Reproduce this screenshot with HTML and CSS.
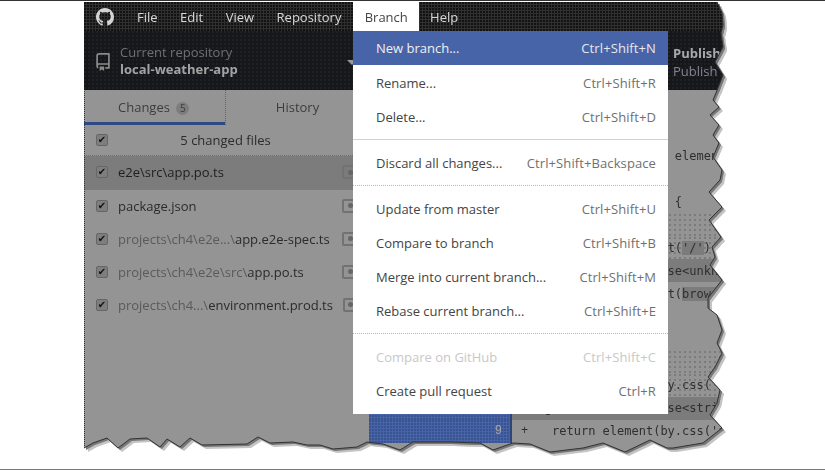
FILE: index.html
```
<!DOCTYPE html>
<html>
	<head>
		<meta charset="utf-8">
		<title>Branch menu</title>
		<link rel="stylesheet" href="styles.css">
	</head>
	<body>
		<div class="shot">
			<div class="torn">
				<div class="window">
					<div class="titlebar">
						<svg class="logo" viewBox="0 0 16 16"><path d="M8 0C3.58 0 0 3.58 0 8c0 3.54 2.29 6.53 5.47 7.59.4.07.55-.17.55-.38 0-.19-.01-.82-.01-1.49-2.01.37-2.53-.49-2.69-.94-.09-.23-.48-.94-.82-1.13-.28-.15-.68-.52-.01-.53.63-.01 1.08.58 1.23.82.72 1.21 1.87.87 2.33.66.07-.52.28-.87.51-1.07-1.78-.2-3.64-.89-3.64-3.95 0-.87.31-1.59.82-2.15-.08-.2-.36-1.02.08-2.12 0 0 .67-.21 2.2.82.64-.18 1.32-.27 2-.27s1.36.09 2 .27c1.53-1.04 2.2-.82 2.2-.82.44 1.1.16 1.92.08 2.12.51.56.82 1.27.82 2.15 0 3.07-1.87 3.75-3.65 3.95.29.25.54.73.54 1.48 0 1.07-.01 1.93-.01 2.2 0 .21.15.46.55.38A8.01 8.01 0 0 0 16 8c0-4.42-3.58-8-8-8Z"/></svg>
						<span class="top-item">File</span>
						<span class="top-item">Edit</span>
						<span class="top-item">View</span>
						<span class="top-item">Repository</span>
						<span class="top-item active">Branch</span>
						<span class="top-item">Help</span>
					</div>
					<div class="toolbar">
						<div class="repo">
							<svg class="repo-icon" viewBox="0 0 16 16"><path d="M2 2.5A2.5 2.5 0 0 1 4.5 0h8.75a.75.75 0 0 1 .75.75v12.5a.75.75 0 0 1-.75.75h-2.5a.75.75 0 0 1 0-1.5h1.75v-2h-8a1 1 0 0 0-.714 1.7.75.75 0 1 1-1.072 1.05A2.495 2.495 0 0 1 2 11.5Zm10.5-1h-8a1 1 0 0 0-1 1v6.708A2.486 2.486 0 0 1 4.5 9h8ZM5 12.25a.25.25 0 0 1 .25-.25h3.5a.25.25 0 0 1 .25.25v3.25a.25.25 0 0 1-.4.2l-1.45-1.087a.25.25 0 0 0-.3 0L5.4 15.7a.25.25 0 0 1-.4-.2Z"/></svg>
							<div class="repo-text">
								<div class="repo-label">Current repository</div>
								<div class="repo-name">local-weather-app</div>
							</div>
							<span class="caret"></span>
						</div>
						<div class="publish">
							<div class="publish-title">Publish</div>
							<div class="publish-sub">Publish</div>
						</div>
					</div>
					<div class="content">
						<div class="sidebar">
							<div class="tabs">
								<div class="tab current">Changes <span class="count">5</span></div>
								<div class="tab">History</div>
							</div>
							<div class="all-files">
								<span class="check"></span>
								<span class="all-label">5 changed files</span>
							</div>
							<div class="file selected"><span class="check"></span><span class="path">e2e\src\app.po.ts</span><span class="status"></span></div>
							<div class="file"><span class="check"></span><span class="path">package.json</span><span class="status"></span></div>
							<div class="file"><span class="check"></span><span class="path"><span class="dir">projects\ch4\e2e...\</span>app.e2e-spec.ts</span><span class="status"></span></div>
							<div class="file"><span class="check"></span><span class="path"><span class="dir">projects\ch4\e2e\src\</span>app.po.ts</span><span class="status"></span></div>
							<div class="file"><span class="check"></span><span class="path"><span class="dir">projects\ch4...\</span>environment.prod.ts</span><span class="status"></span></div>
						</div>
						<div class="diff">
							<div class="line"><pre>     import { by, element } from 'protractor'</pre></div>
							<div class="line"><pre></pre></div>
							<div class="line"><pre>     navigateTo() {</pre></div>
							<div class="line dots"><pre></pre></div>
							<div class="line dots"><pre>return browser.ge<b>t(<i>'/'</i>)</b></pre></div>
							<div class="line dense"><pre>navigate(): Promise&lt;unknown&gt; {</pre></div>
							<div class="line"><pre>return browser.ge<b>t(<i>browser.baseUrl</i>)</b></pre></div>
							<div class="line"><pre></pre></div>
							<div class="line"><pre></pre></div>
							<div class="line dots"><pre></pre></div>
							<div class="line dots"><pre> return element(by.css('app-root h1')).getText()</pre></div>
							<div class="line dense added"><span class="gutter"></span><pre>getTitle(): Promise&lt;string&gt; {</pre></div>
							<div class="line added"><span class="gutter"><span class="num">9</span></span><span class="sign">+</span><pre> return element(by.css('app-root h1')).getText()</pre></div>
						</div>
					</div>
				</div>
			</div>
			<svg class="edge" viewBox="0 0 640 451">
				<polyline points="633,0 638,11 639,23 637,31 639,45 631,60 639,73 634,86 629,98 635,105 626,113 635,123 629,133 635,141 629,155 638,168 636,178 625,190 638,205 625,218 637,235 628,245 631,255 626,263 638,278 624,296 624,306 633,313 638,328 633,341 638,351 631,365 624,375 636,388 633,401 626,413 638,426 619,441 589,446 583,446 566,438 541,450 519,441 499,446 466,450 446,442 429,441 409,448 396,441 366,440 329,440 316,448 299,442 283,440 273,445 249,447 236,443 223,443 209,440 186,441 174,435 163,442 118,443 106,436 96,445 83,437 76,445 63,436 46,437 34,446 23,436 9,441 0,446"/>
				<polyline class="edge-left" points="0.5,446 0.5,88"/>
			</svg>
			<div class="menu">
				<div class="menu-item highlighted"><span>New branch...</span><span class="keys">Ctrl+Shift+N</span></div>
				<div class="menu-item"><span>Rename...</span><span class="keys">Ctrl+Shift+R</span></div>
				<div class="menu-item"><span>Delete...</span><span class="keys">Ctrl+Shift+D</span></div>
				<div class="menu-sep"></div>
				<div class="menu-item"><span>Discard all changes...</span><span class="keys">Ctrl+Shift+Backspace</span></div>
				<div class="menu-sep dotted"></div>
				<div class="menu-item"><span>Update from master</span><span class="keys">Ctrl+Shift+U</span></div>
				<div class="menu-item"><span>Compare to branch</span><span class="keys">Ctrl+Shift+B</span></div>
				<div class="menu-item"><span>Merge into current branch...</span><span class="keys">Ctrl+Shift+M</span></div>
				<div class="menu-item"><span>Rebase current branch...</span><span class="keys">Ctrl+Shift+E</span></div>
				<div class="menu-sep dotted"></div>
				<div class="menu-item disabled"><span>Compare on GitHub</span><span class="keys">Ctrl+Shift+C</span></div>
				<div class="menu-item"><span>Create pull request</span><span class="keys">Ctrl+R</span></div>
			</div>
		</div>
	</body>
</html>
```

FILE: styles.css
```
:root {
	--pane: #949494;
	--blue: #4764a8;
	--dot: radial-gradient(circle at 1px 1px, #7b7b7b 0.7px, transparent 0.9px);
}
html, body {
	margin: 0;
	background: #ffffff;
}
.shot {
	position: relative;
	box-sizing: border-box;
	width: 825px;
	height: 470px;
	overflow: hidden;
	background: #ffffff;
	border-top: 1px solid #333333;
	border-bottom: 1px solid #777777;
	font-family: "Open Sans", "Noto Sans", sans-serif;
	font-size: 13px;
}

/* torn paper effect */
.torn {
	width: 640px;
	height: 451px;
	margin: 1px 0 0 84px;
	filter: drop-shadow(2px 2px 0 #777777) drop-shadow(2px 2px 0 #c4c4c4);
}
.window {
	display: flex;
	flex-direction: column;
	height: 100%;
	background: var(--pane);
	clip-path: polygon(633px 0, 638px 11px, 639px 23px, 637px 31px, 639px 45px, 631px 60px, 639px 73px, 634px 86px, 629px 98px, 635px 105px, 626px 113px, 635px 123px, 629px 133px, 635px 141px, 629px 155px, 638px 168px, 636px 178px, 625px 190px, 638px 205px, 625px 218px, 637px 235px, 628px 245px, 631px 255px, 626px 263px, 638px 278px, 624px 296px, 624px 306px, 633px 313px, 638px 328px, 633px 341px, 638px 351px, 631px 365px, 624px 375px, 636px 388px, 633px 401px, 626px 413px, 638px 426px, 619px 441px, 589px 446px, 583px 446px, 566px 438px, 541px 450px, 519px 441px, 499px 446px, 466px 450px, 446px 442px, 429px 441px, 409px 448px, 396px 441px, 366px 440px, 329px 440px, 316px 448px, 299px 442px, 283px 440px, 273px 445px, 249px 447px, 236px 443px, 223px 443px, 209px 440px, 186px 441px, 174px 435px, 163px 442px, 118px 443px, 106px 436px, 96px 445px, 83px 437px, 76px 445px, 63px 436px, 46px 437px, 34px 446px, 23px 436px, 9px 441px, 0 446px, 0 0);
}
.edge {
	position: absolute;
	left: 84px;
	top: 1px;
	width: 640px;
	height: 451px;
}
.edge polyline {
	fill: none;
	stroke: #333333;
	stroke-width: 1;
}
.edge .edge-left {
	stroke-dasharray: 1 1;
}

/* title bar */
.titlebar {
	display: flex;
	align-items: center;
	flex: none;
	height: 29px;
	background-color: #303030;
	background-image: radial-gradient(circle at 1px 1px, #111111 0.7px, transparent 0.9px);
	background-size: 3px 3px;
	color: #d8d8d8;
}
.logo {
	flex: none;
	width: 18px;
	height: 18px;
	margin: 0 11.75px 0 12px;
	fill: #d4d4d4;
}
.top-item {
	padding: 0 11.25px;
}
.top-item.active {
	align-self: stretch;
	display: flex;
	align-items: center;
	padding: 0 11px 0 12px;
	background: #ffffff;
	color: #444444;
}

/* toolbar */
.toolbar {
	display: flex;
	flex: none;
	height: 59px;
	background-color: #15171a;
	background-image: radial-gradient(circle at 1px 1px, #2a2c2f 0.6px, transparent 0.8px);
	background-size: 4px 4px;
}
.repo {
	display: flex;
	align-items: center;
	flex: none;
	gap: 10px;
	box-sizing: border-box;
	width: 285px;
	padding: 3px 12px 0;
	line-height: 17px;
}
.repo-icon {
	flex: none;
	width: 18px;
	height: 18px;
	margin: 0 -2px;
	fill: #8a8a8a;
}
.repo-text {
	margin-top: -2px;
	white-space: nowrap;
}
.repo-label {
	color: #707070;
}
.repo-name {
	color: #a3a3a3;
	font-weight: 700;
}
.caret {
	margin-left: auto;
	border: 5px solid transparent;
	border-top-color: #999999;
	border-bottom: 0;
}
.publish {
	margin-left: 304px;
	padding-top: 13px;
	line-height: 18px;
	white-space: nowrap;
}
.publish-title {
	color: #a9a9a9;
	font-weight: 700;
}
.publish-sub {
	color: #808590;
}

/* changes list */
.content {
	display: flex;
	flex: 1;
	min-height: 0;
}
.sidebar {
	flex: none;
	width: 285px;
	color: #2b2b2b;
}
.tabs {
	display: flex;
	height: 35px;
	line-height: 34px;
}
.tab {
	flex: 1;
	text-align: center;
	color: #3d3d3d;
}
.tab.current {
	box-sizing: border-box;
	flex: none;
	width: 142px;
	padding-left: 34px;
	text-align: left;
	border-right: 1px dotted #666666;
	box-shadow: inset 0 -3px 0 #2e4a85;
}
.count {
	display: inline-block;
	width: 13px;
	height: 13px;
	margin-left: 3px;
	border-radius: 50%;
	background: #7d7d7d;
	font-size: 10px;
	line-height: 13px;
	text-align: center;
}
.all-files {
	display: flex;
	align-items: center;
	box-sizing: border-box;
	height: 31px;
	padding-left: 12px;
	border-bottom: 1px dotted #6e6e6e;
}
.all-label {
	flex: 1;
	padding-right: 26px;
	text-align: center;
}
.check {
	display: flex;
	align-items: center;
	justify-content: center;
	flex: none;
	box-sizing: border-box;
	width: 12px;
	height: 12px;
	border: 1px solid #666666;
	border-radius: 2px;
	background: #7e7e7e;
}
.check::after {
	content: "\2714";
	font-family: "DejaVu Sans", sans-serif;
	font-size: 10px;
	line-height: 10px;
	color: #111111;
}
.file {
	display: flex;
	align-items: center;
	gap: 10px;
	box-sizing: border-box;
	height: 33px;
	padding: 0 0 2px 12px;
	white-space: nowrap;
}
.file.selected {
	height: 34px;
	background-image: var(--dot);
	background-size: 2px 2px;
	color: #1f1f1f;
}
.path {
	flex: 1;
}
.dir {
	color: #5a5a5a;
}
.status {
	flex: none;
	box-sizing: border-box;
	width: 16px;
	height: 14px;
	margin-right: 11px;
	border: 2px solid #727272;
	border-radius: 2px;
}
.status::after {
	content: "";
	display: block;
	width: 5px;
	height: 5px;
	margin: 2.5px auto;
	border-radius: 50%;
	background: #666666;
}

/* diff pane */
.diff {
	flex: 1;
	padding-top: 55px;
	font-family: "Liberation Mono", monospace;
	font-size: 12px;
	color: #2f2f2f;
}
.line {
	display: flex;
	align-items: center;
	height: 22.9px;
	padding-left: 175.8px;
}
.line pre {
	margin: 0;
	white-space: pre;
}
.line b {
	font-weight: 400;
}
.line i {
	font-style: normal;
	background-image: var(--dot);
	background-size: 2px 2px;
}
.line.dots {
	background-image: var(--dot);
	background-size: 5px 5px;
}
.line.dense {
	background-image: var(--dot);
	background-size: 2px 2px;
}
.line.added {
	padding-left: 0;
}
.gutter {
	display: flex;
	align-items: center;
	justify-content: flex-end;
	flex: none;
	align-self: stretch;
	box-sizing: border-box;
	width: 143px;
	padding-right: 10px;
	background-color: var(--blue);
	background-image: radial-gradient(circle at 1px 1px, #2a3f74 0.6px, transparent 0.8px);
	background-size: 3px 3px;
	box-shadow: inset -2px 0 0 #2f4578;
}
.num {
	color: #a9a9a9;
}
.sign {
	flex: none;
	box-sizing: border-box;
	width: 32.8px;
	padding-left: 9px;
}
.line.dense.added .gutter {
	margin-right: 32.8px;
}

/* open Branch menu */
.menu {
	position: absolute;
	left: 353px;
	top: 30px;
	box-sizing: border-box;
	width: 315px;
	height: 383px;
	background: #ffffff;
	color: #444444;
}
.menu-item {
	display: flex;
	align-items: center;
	justify-content: space-between;
	height: 34px;
	padding: 0 12px 0 23px;
}
.keys {
	color: #707070;
	letter-spacing: 0.1px;
}
.menu-item.highlighted {
	margin-bottom: 1px;
	background: var(--blue);
	color: #f0f0f0;
}
.menu-item.highlighted .keys {
	color: #e8e8e8;
}
.menu-item.disabled, .menu-item.disabled .keys {
	color: #c8c8c8;
}
.menu-sep {
	height: 1px;
	margin: 5px 0 6px;
	background: #d2d2d2;
}
.menu-sep.dotted {
	background: repeating-linear-gradient(90deg, #b8b8b8 0 1px, transparent 1px 2px);
}
```
